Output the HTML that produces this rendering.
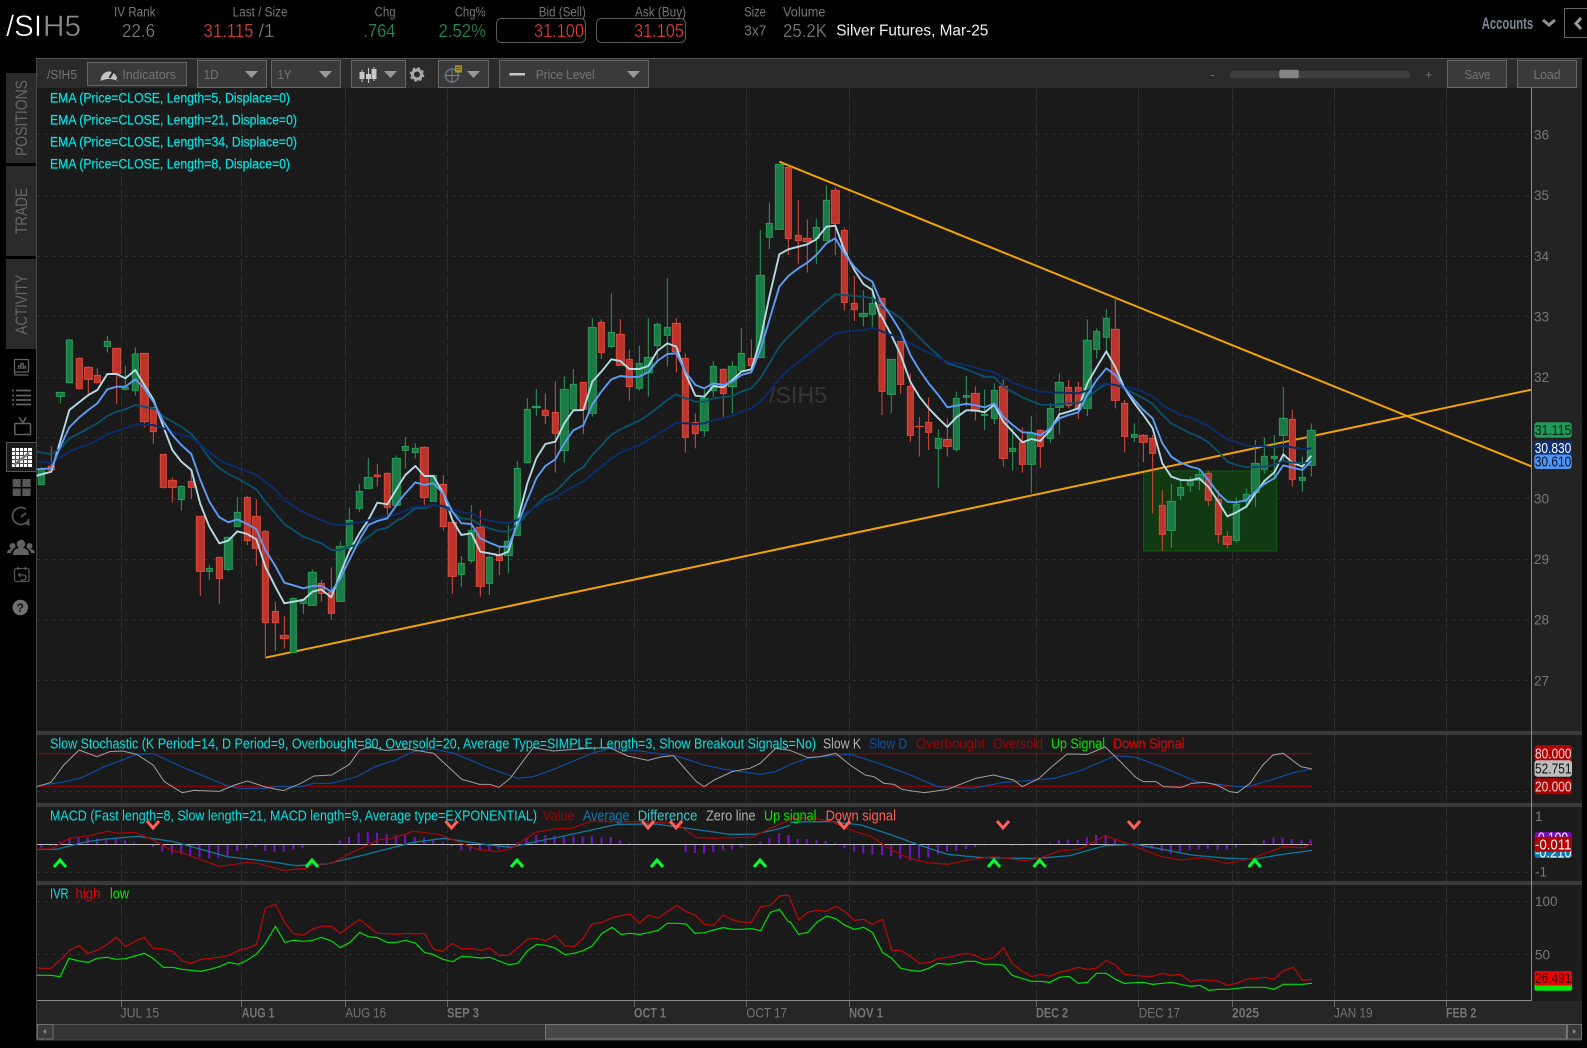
<!DOCTYPE html>
<html><head><meta charset="utf-8"><title>/SIH5</title>
<style>
html,body{margin:0;padding:0;background:#000;width:1587px;height:1048px;overflow:hidden}
svg{display:block;font-family:"Liberation Sans",sans-serif}
path,rect,polyline,line,circle{vector-effect:non-scaling-stroke}
.n{fill:none}
.l{fill:#767676;font-size:13.500px}
.v{fill:#858585;font-size:18.500px;stroke:#000;stroke-width:.35}
.r{fill:#f5402f;font-size:18.500px;stroke:#000;stroke-width:.35}
.g{fill:#22a05a;font-size:18.500px;stroke:#000;stroke-width:.35}
.t{fill:#747474;font-size:12.500px}
.c{fill:#00e4e4;font-size:13.500px;stroke:#00e4e4;stroke-width:.2}
.s{fill:#00e4e4;font-size:14.500px}
.a{fill:#787878;font-size:13.500px}
.d{fill:#737373;font-size:14px}
.b{font-weight:bold}
.tag{font-size:14.500px;fill:#fff}
.tab{fill:#666;font-size:17px}
.w{stroke-width:1;stroke:#2a9a5a}
.x{stroke-width:1;stroke:#dc4a3d}
.gb{fill:#1c7a46;stroke:#2a9a5a;stroke-width:1}
.rb{fill:#bb352c;stroke:#dc4a3d;stroke-width:1}
.e1{stroke:#b4dae6;stroke-width:1.900;fill:none;stroke-linejoin:round}
.e2{stroke:#5c9cf5;stroke-width:1.900;fill:none;stroke-linejoin:round}
.e3{stroke:#0b5068;stroke-width:1.900;fill:none;stroke-linejoin:round}
.e4{stroke:#0b2c6c;stroke-width:1.900;fill:none;stroke-linejoin:round}
.btn{fill:#3a3a3a;stroke:#666;stroke-width:1}
</style></head><body>
<svg width="1587" height="1048" viewBox="0 0 1587 1048" xmlns="http://www.w3.org/2000/svg">
<rect width="1587" height="1048" fill="#000"/>

<!-- header -->
<text x="6" y="36" font-size="30" fill="#fff" stroke="#000" stroke-width=".5" textLength="36" lengthAdjust="spacingAndGlyphs">/SI</text>
<text x="43" y="36" font-size="30" fill="#8a8a8a" stroke="#000" stroke-width=".5" textLength="38" lengthAdjust="spacingAndGlyphs">H5</text>
<text class="l" x="114" y="16.500" textLength="41.500" lengthAdjust="spacingAndGlyphs">IV Rank</text>
<text class="v" x="122" y="37" textLength="33" lengthAdjust="spacingAndGlyphs">22.6</text>
<text class="l" x="232.600" y="16.500" textLength="55" lengthAdjust="spacingAndGlyphs">Last / Size</text>
<text class="r" x="203.500" y="37" textLength="50" lengthAdjust="spacingAndGlyphs">31.115</text>
<text class="v" x="258.600" y="37" textLength="16" lengthAdjust="spacingAndGlyphs">/1</text>
<text class="l" x="374.600" y="16.500" textLength="21" lengthAdjust="spacingAndGlyphs">Chg</text>
<text class="g" x="363.400" y="37" textLength="32" lengthAdjust="spacingAndGlyphs">.764</text>
<text class="l" x="454.700" y="16.500" textLength="31" lengthAdjust="spacingAndGlyphs">Chg%</text>
<text class="g" x="438.500" y="37" textLength="47.500" lengthAdjust="spacingAndGlyphs">2.52%</text>
<rect x="496.500" y="18.500" width="89" height="24" rx="5" fill="none" stroke="#5a5a5a"/>
<text class="l" x="538.800" y="16.500" textLength="47" lengthAdjust="spacingAndGlyphs">Bid (Sell)</text>
<text class="r" x="534" y="37" textLength="50" lengthAdjust="spacingAndGlyphs">31.100</text>
<rect x="596.500" y="18.500" width="89" height="24" rx="5" fill="none" stroke="#5a5a5a"/>
<text class="l" x="635" y="16.500" textLength="51" lengthAdjust="spacingAndGlyphs">Ask (Buy)</text>
<text class="r" x="634" y="37" textLength="50" lengthAdjust="spacingAndGlyphs">31.105</text>
<text class="l" x="744.300" y="16.500" textLength="21.500" lengthAdjust="spacingAndGlyphs">Size</text>
<text class="l" x="744.300" y="35.500" textLength="22" lengthAdjust="spacingAndGlyphs" style="font-size:15px">3x7</text>
<text class="l" x="783" y="16.500" textLength="42.500" lengthAdjust="spacingAndGlyphs">Volume</text>
<text class="v" x="783" y="37" textLength="44" lengthAdjust="spacingAndGlyphs">25.2K</text>
<text x="836.300" y="35.500" font-size="16" fill="#f2f2f2" textLength="152" lengthAdjust="spacingAndGlyphs">Silver Futures, Mar-25</text>
<text x="1481.700" y="29" font-size="16.500" font-weight="bold" fill="#7b8794" textLength="51.500" lengthAdjust="spacingAndGlyphs">Accounts</text>
<path d="M1543 20l6 5 6-5" fill="none" stroke="#8a949e" stroke-width="3"/>
<rect x="1564.500" y="8.500" width="30" height="29" fill="none" stroke="#666"/>
<path d="M1581 18l-5 5.500 5 5.500" fill="none" stroke="#9a9a9a" stroke-width="3"/>

<!-- sidebar tabs -->
<rect x="6" y="73" width="30" height="90" fill="#2a2a2a"/>
<rect x="6" y="166" width="30" height="90" fill="#2a2a2a"/>
<rect x="6" y="259" width="30" height="90" fill="#2a2a2a"/>
<text class="tab" transform="translate(27,118) rotate(-90)" text-anchor="middle" textLength="76" lengthAdjust="spacingAndGlyphs">POSITIONS</text>
<text class="tab" transform="translate(27,211) rotate(-90)" text-anchor="middle" textLength="46" lengthAdjust="spacingAndGlyphs">TRADE</text>
<text class="tab" transform="translate(27,304.500) rotate(-90)" text-anchor="middle" textLength="60" lengthAdjust="spacingAndGlyphs">ACTIVITY</text>

<!-- chart frame -->
<rect x="36" y="58" width="1546" height="982" fill="#1a1a1a"/>
<rect x="36" y="58" width="1" height="982" fill="#484848"/>
<rect x="37" y="59" width="1545" height="29" fill="#2a2a2a"/>
<rect x="36" y="58" width="1546" height="1" fill="#555"/>
<rect x="1532" y="88" width="50" height="643" fill="#232323"/>
<rect x="1532" y="735" width="50" height="265" fill="#1c1c1c"/>

<!-- grids -->
<path d="M121.500 88V1000M241.500 88V1000M345.500 88V1000M447.500 88V1000M634.500 88V1000M746.500 88V1000M849.500 88V1000M1036.500 88V1000M1138.500 88V1000M1232.500 88V1000M1334.500 88V1000M1446.500 88V1000" stroke="#2c2c2c" stroke-width="1" stroke-dasharray="14 3" fill="none"/>
<path d="M37 134.500H1531M37 195.500H1531M37 256.500H1531M37 316.500H1531M37 377.500H1531M37 437.500H1531M37 498.500H1531M37 559.500H1531M37 619.500H1531M37 680.500H1531M37 791.500H1531M37 872.500H1531M37 901.500H1531M37 954.500H1531" stroke="#2e2e2e" stroke-width="1" stroke-dasharray="3 5" fill="none"/>

<!-- watermark -->
<text x="769" y="403" font-size="23" fill="#363636" textLength="58" lengthAdjust="spacingAndGlyphs">/SIH5</text>

<!-- green box -->
<rect x="1143.500" y="471" width="133" height="80" fill="#113a12" stroke="#0b5c0b"/>

<!-- trend lines -->
<path d="M265.300 657.700L1531.300 389.700M779.300 161.700L1531.300 466.300" stroke="#f0a400" stroke-width="2" fill="none"/>

<!-- candles part 1 -->
<g transform="translate(0,330) scale(.33333)">
<path class="w n" d="M124 412V464M181 187V220M208 27V160M322 18V68M376 108V182M406 52V197M544 466V542M628 705V750M685 622V725M712 502V590M880 803V967M910 808V852M937 718V826M1021 634V814M1048 532V655M1078 462V546M1105 384V475M1189 376V526"/>
<path class="x n" d="M154 350V420M238 82V178M265 108V190M292 115V160M350 55V222M433 70V292M460 232V342M490 373V476M517 442V518M574 420V506M601 559V798M658 680V822M742 498V645M769 508V708M796 600V982M826 816V962M853 858V956M964 750V815M994 712V870M1132 402V470M1162 428V560"/>
<path class="gb" d="M124 418m-9 0h18V464h-18zM181 187m-12 0h24V199h-24zM208 30m-9 0h18V158h-18zM322 34m-9 0h18V50h-18zM376 172m-9 0h18V178h-18zM406 72m-9 0h18V182h-18zM544 469m-9 0h18V509h-18zM628 715m-9 0h18V724h-18zM685 622m-12 0h24V718h-24zM712 547m-9 0h18V590h-18zM880 805m-9 0h18V967h-18zM910 808m-9 0h18V820h-18zM937 727m-12 0h24V826h-24zM1021 649m-12 0h24V814h-24zM1048 571m-9 0h18V655h-18zM1078 484m-9 0h18V535h-18zM1105 442m-12 0h24V475h-24zM1189 385m-12 0h24V526h-24z"/>
<path class="rb" d="M154 408m-9 0h18V420h-18zM238 85m-9 0h18V176h-18zM265 112m-12 0h24V148h-24zM292 136m-9 0h18V158h-18zM350 55m-12 0h24V130h-24zM433 70m-12 0h24V275h-24zM460 232m-9 0h18V305h-18zM490 373m-9 0h18V472h-18zM517 451m-12 0h24V472h-24zM574 454m-9 0h18V472h-18zM601 559m-12 0h24V724h-24zM658 682m-9 0h18V745h-18zM742 502m-9 0h18V632h-18zM769 559m-12 0h24V655h-24zM796 604m-9 0h18V878h-18zM826 844m-9 0h18V878h-18zM853 916m-12 0h24V926h-24zM964 760m-9 0h18V790h-18zM994 787m-9 0h18V850h-18zM1132 435m-9 0h18V440h-18zM1162 430m-9 0h18V532h-18z"/>
</g>
<!-- candles part 2 -->
<g transform="translate(400,150) scale(.33333)">
<path class="w n" d="M16 862V955M46 880V925M100 976V1054M184 1218V1310M214 1065V1240M268 1217V1335M325 1125V1270M352 934V1156M382 745V938M409 717V798M493 679V938M520 657V778M577 505V800M634 430V595M718 586V722M745 505V740M772 518V640M802 385V650M913 715V860M940 633V740M997 633V790M1024 535V665M1081 240V623M1108 157V297M1138 43V238M1249 205V342M1279 106V271M1390 421V530M1417 405V530"/>
<path class="x n" d="M73 888V1065M130 975V1142M157 1117V1332M241 1080V1340M298 1190V1275M436 730V822M466 694V968M550 697V852M604 508V627M661 507V646M688 600V752M829 505V668M856 610V908M886 790V895M970 655V802M1054 568V665M1165 45V315M1195 150V342M1222 208V368M1306 112V315M1333 232V482M1363 378V513"/>
<path class="gb" d="M16 889m-9 0h18V901h-18zM46 895m-9 0h18V908h-18zM100 976m-9 0h18V1054h-18zM184 1240m-9 0h18V1273h-18zM214 1141m-9 0h18V1232h-18zM268 1222m-9 0h18V1300h-18zM325 1174m-12 0h24V1217h-24zM352 955m-9 0h18V1156h-18zM382 778m-9 0h18V938h-18zM409 769m-12 0h24V773h-24zM493 718m-12 0h24V902h-24zM520 703m-9 0h18V778h-18zM577 532m-12 0h24V790h-24zM634 547m-9 0h18V590h-18zM718 640m-9 0h18V715h-18zM745 622m-12 0h24V668h-24zM772 523m-9 0h18V587h-18zM802 532m-9 0h18V556h-18zM913 745m-12 0h24V842h-24zM940 649m-9 0h18V722h-18zM997 649m-12 0h24V710h-24zM1024 610m-9 0h18V662h-18zM1081 376m-12 0h24V623h-24zM1108 220m-9 0h18V262h-18zM1138 43m-12 0h24V238h-24zM1249 232m-9 0h18V265h-18zM1279 151m-9 0h18V271h-18zM1390 490m-12 0h24V499h-24zM1417 460m-9 0h18V493h-18z"/>
<path class="rb" d="M73 892m-12 0h24V1042h-24zM130 1003m-9 0h18V1130h-18zM157 1117m-12 0h24V1279h-24zM241 1132m-12 0h24V1309h-24zM298 1215m-9 0h18V1232h-18zM436 781m-9 0h18V797h-18zM466 787m-9 0h18V850h-18zM550 697m-9 0h18V778h-18zM604 517m-9 0h18V607h-18zM661 553m-12 0h24V646h-24zM688 628m-9 0h18V710h-18zM829 520m-12 0h24V605h-24zM856 625m-9 0h18V862h-18zM886 817m-9 0h18V851h-18zM970 658m-9 0h18V731h-18zM1054 625m-9 0h18V647h-18zM1165 52m-9 0h18V265h-18zM1195 256m-9 0h18V272h-18zM1222 265m-12 0h24V275h-24zM1306 121m-12 0h24V220h-24zM1333 241m-9 0h18V457h-18zM1363 460m-9 0h18V479h-18z"/>
</g>
<!-- candles part 3 -->
<g transform="translate(880,280) scale(.33333)">
<path class="w n" d="M34 238V400M175 448V623M229 335V515M259 288V380M314 328V450M343 310V432M398 445V572M454 408V640M511 370V488M538 280V462M622 118V408M650 145V236M679 87V212M763 430V486M874 612V804M902 596V660M931 590V636M958 570V630M1069 652V788M1099 625V680M1126 480V680M1153 472V582M1183 465V590M1210 321V540M1267 530V635M1294 430V590"/>
<path class="x n" d="M6 55V405M62 184V342M91 280V485M118 411V530M146 352V510M202 415V530M286 319V422M370 298V560M427 442V578M481 448V563M566 300V385M595 306V417M706 48V385M734 360V518M790 462V546M818 465V700M847 630V812M985 572V678M1015 630V790M1042 754V805M1237 390V620"/>
<path class="gb" d="M34 238m-12 0h24V343h-24zM175 475m-9 0h18V505h-18zM229 355m-9 0h18V508h-18zM259 346m-9 0h18V352h-18zM314 403m-9 0h18V406h-18zM343 331m-9 0h18V415h-18zM398 505m-9 0h18V514h-18zM454 460m-12 0h24V553h-24zM511 385m-9 0h18V475h-18zM538 307m-12 0h24V382h-24zM622 181m-12 0h24V385h-24zM650 154m-9 0h18V208h-18zM679 115m-9 0h18V172h-18zM763 463m-9 0h18V472h-18zM874 664m-12 0h24V751h-24zM902 622m-9 0h18V646h-18zM931 601m-9 0h18V616h-18zM958 583m-12 0h24V601h-24zM1069 673m-9 0h18V781h-18zM1099 643m-9 0h18V665h-18zM1126 550m-12 0h24V637h-24zM1153 529m-9 0h18V568h-18zM1183 529m-9 0h18V536h-18zM1210 415m-12 0h24V466h-24zM1267 592m-9 0h18V601h-18zM1294 451m-12 0h24V556h-24z"/>
<path class="rb" d="M6 55m-9 0h18V334h-18zM62 184m-9 0h18V313h-18zM91 319m-9 0h18V466h-18zM118 439m-12 0h24V440h-24zM146 427m-9 0h18V457h-18zM202 478m-12 0h24V499h-24zM286 340m-12 0h24V394h-24zM370 319m-12 0h24V535h-24zM427 487m-9 0h18V553h-18zM481 451m-9 0h18V499h-18zM566 322m-9 0h18V376h-18zM595 322m-9 0h18V388h-18zM706 148m-12 0h24V361h-24zM734 370m-9 0h18V469h-18zM790 466m-12 0h24V487h-24zM818 475m-9 0h18V520h-18zM847 676m-9 0h18V763h-18zM985 580m-9 0h18V661h-18zM1015 658m-9 0h18V763h-18zM1042 769m-12 0h24V793h-24zM1237 418m-9 0h18V598h-18z"/>
</g>

<!-- EMAs -->
<g transform="translate(0,330) scale(.33333)">
<polyline class="e1" points="110,437 154,425 208,240 265,195 292,180 322,132 350,132 376,145 406,120 433,165 460,208 490,290 517,360 544,395 574,420 601,522 628,590 658,640 685,632 712,604 742,612 769,628 796,710 826,770 853,820 880,815 910,810 937,785 964,778 994,802 1021,730 1048,665 1078,610 1105,570 1132,518 1162,523 1200,460"/>
<polyline class="e3" points="110,365 154,373 181,355 208,325 238,310 265,295 292,280 322,258 350,245 376,238 406,225 433,230 470,238 490,260 544,290 574,312 601,345 628,385 658,415 685,432 712,445 769,478 796,515 853,582 910,620 964,640 994,660 1021,660 1078,640 1132,600 1162,593 1200,565"/>
<polyline class="e4" points="110,395 154,398 208,365 238,352 280,338 322,312 376,295 406,283 460,285 490,295 544,315 574,322 601,345 658,390 685,403 712,412 769,435 826,478 853,510 910,547 964,570 994,583 1021,586 1078,577 1132,565 1200,550"/>
<polyline class="e2" points="110,418 154,415 181,350 208,292 238,262 265,240 292,220 322,178 350,170 376,170 406,148 433,175 460,215 490,275 517,315 544,345 574,372 601,450 628,515 658,562 685,577 712,568 742,582 769,598 796,660 826,708 853,758 880,766 910,775 937,768 964,767 994,785 1021,745 1048,690 1078,630 1105,585 1132,573 1162,565 1200,510"/>
</g>
<g transform="translate(400,150) scale(.33333)">
<polyline class="e1" points="0,1000 16,975 46,948 73,978 100,978 130,1030 157,1110 184,1155 214,1150 241,1205 268,1210 298,1216 325,1205 352,1115 382,1000 409,925 436,882 466,875 493,820 520,781 550,780 577,695 604,665 634,628 661,633 688,657 718,657 745,648 772,603 802,580 829,590 856,670 886,737 913,740 940,708 970,712 997,690 1024,665 1054,658 1081,570 1108,440 1138,313 1165,298 1195,290 1222,283 1249,268 1279,230 1306,227 1333,300 1363,360 1390,402 1417,420 1440,500"/>
<polyline class="e3" points="0,1110 46,1075 73,1075 100,1065 130,1070 157,1085 184,1105 214,1108 241,1125 268,1135 298,1144 325,1145 352,1125 382,1090 436,1040 466,1025 520,970 550,952 577,915 634,855 661,838 718,812 745,795 802,750 829,733 856,745 886,755 913,755 940,745 997,738 1024,725 1054,715 1081,685 1108,640 1138,590 1165,560 1222,505 1279,455 1306,433 1390,440 1417,445 1440,460"/>
<polyline class="e4" points="0,1088 46,1070 73,1070 100,1065 130,1068 184,1087 214,1090 241,1105 298,1118 325,1120 352,1110 382,1085 436,1053 466,1042 520,1010 550,995 577,972 634,925 661,908 718,885 745,870 829,818 886,822 913,820 940,810 970,805 997,797 1024,785 1054,775 1081,755 1108,725 1138,685 1165,660 1222,615 1279,570 1306,550 1333,545 1390,540 1417,533 1440,542"/>
<polyline class="e2" points="0,1050 16,1030 46,997 73,1005 100,1000 130,1030 157,1085 184,1120 214,1122 241,1165 268,1178 298,1190 325,1190 352,1125 382,1050 409,985 436,948 466,928 493,880 520,841 550,826 577,763 604,725 634,688 661,678 688,681 718,680 745,667 772,633 802,612 829,610 856,665 886,705 913,715 940,700 970,705 997,695 1024,675 1054,667 1081,600 1108,510 1138,410 1165,378 1195,355 1222,338 1249,315 1279,280 1306,265 1333,310 1363,350 1390,378 1417,395 1440,450"/>
</g>
<g transform="translate(880,280) scale(.33333)">
<polyline class="e1" points="0,100 34,165 62,225 91,305 118,350 146,385 175,415 202,441 229,412 259,391 286,391 314,397 343,374 370,425 398,455 427,487 454,477 481,483 511,450 538,403 566,395 595,385 622,310 650,262 679,214 706,262 734,325 763,370 790,405 818,445 847,550 874,590 902,600 931,601 958,595 985,620 1015,665 1042,709 1069,697 1099,680 1126,640 1153,603 1183,577 1210,523 1237,548 1267,560 1294,527"/>
<polyline class="e3" points="0,80 34,95 62,115 91,145 146,200 202,250 259,268 314,290 343,292 370,320 427,352 481,374 511,375 566,370 595,370 622,355 650,330 679,312 706,315 734,325 790,355 818,372 847,405 874,430 931,460 958,470 985,487 1015,515 1042,545 1069,555 1099,562 1153,560 1183,555 1210,542 1237,548 1267,550 1294,547"/>
<polyline class="e4" points="0,152 34,165 62,175 118,205 202,245 259,255 286,263 343,277 398,308 454,328 481,335 511,337 595,340 622,332 650,318 679,310 706,315 763,326 790,335 818,350 847,375 902,405 931,412 985,438 1042,478 1099,497 1153,499 1183,502 1210,497 1237,502 1267,508 1294,505"/>
<polyline class="e2" points="0,60 34,110 62,155 91,225 118,270 146,310 175,345 202,382 229,377 259,371 286,376 314,382 343,370 370,410 398,435 427,457 454,458 481,466 511,445 538,415 566,405 595,397 622,345 650,300 679,265 706,285 734,325 763,360 790,390 818,415 847,490 874,530 902,548 931,560 958,567 985,600 1015,640 1042,665 1069,667 1099,660 1126,635 1153,612 1183,595 1210,556 1237,563 1267,570 1294,543"/>
</g>

<!-- separators -->
<rect x="37" y="731" width="1545" height="4" fill="#3a3a3a"/>
<rect x="37" y="803" width="1545" height="4" fill="#3a3a3a"/>
<rect x="37" y="881" width="1545" height="4" fill="#3a3a3a"/>

<!-- stochastic -->
<path d="M37 753.700H1312M37 786.300H1312" stroke="#a30000" stroke-width="1" fill="none"/>
<g transform="translate(0,725) scale(.5102,.33333)">
<polyline class="n" stroke="#0a4fa8" stroke-width="1.100" points="72,183 120,172 160,158 205,125 268,88 300,86 360,128 445,182 470,190 520,190 540,185 590,185 615,175 650,175 700,155 735,125 775,105 810,80 850,72 890,85 960,130 1015,160 1045,155 1090,130 1160,85 1195,70 1255,78 1330,95 1380,120 1420,133 1490,148 1520,140 1549,118"/>
<polyline class="n" stroke="#a0a0a0" stroke-width="1" points="72,185 100,172 125,120 155,75 190,95 215,80 240,78 268,88 300,120 322,170 357,203 380,196 430,199 460,180 485,168 520,186 555,197 590,175 615,153 650,150 685,118 705,75 725,65 755,76 800,72 850,85 905,163 940,178 960,178 978,187 1000,160 1045,68 1085,78 1150,70 1195,68 1230,93 1270,106 1295,96 1320,92 1365,170 1380,185 1400,165 1435,140 1470,130 1490,115 1520,70 1549,76"/>
</g>
<g transform="translate(790,725) scale(.5084,.33333)">
<polyline class="n" stroke="#0a4fa8" stroke-width="1.100" points="0,118 35,100 60,95 120,88 180,118 240,152 290,185 360,190 420,172 480,165 520,160 575,135 640,92 680,97 730,125 800,170 880,185 900,185 950,163 990,143 1027,132"/>
<polyline class="n" stroke="#a0a0a0" stroke-width="1" points="0,76 35,98 60,95 90,85 118,120 148,150 165,155 185,175 205,178 220,193 240,198 265,203 310,193 335,178 365,160 400,150 440,165 457,185 490,160 515,125 545,87 585,88 620,66 650,110 680,157 695,170 720,170 735,185 770,187 790,175 815,172 840,180 865,200 880,203 905,175 930,120 950,90 970,85 1005,125 1027,132"/>
</g>

<!-- MACD -->
<g transform="translate(0,725) scale(.5102,.33333)">
<path class="n" stroke="#7612c4" stroke-width="2" d="M81 358V368M99 358V363M118 358V350M136 358V338M154 358V336M172 358V338M190 358V340M208 358V340M227 358V340M245 358V346M263 358V352M300 358V366M318 358V380M337 358V386M355 358V388M373 358V393M391 358V398M410 358V400M428 358V400M446 358V393M465 358V378M483 358V370M501 358V366M520 358V378M538 358V380M556 358V380M575 358V373M593 358V370M611 358V361M630 358V356M648 358V355M666 358V346M684 358V336M703 358V323M721 358V322M739 358V323M758 358V328M776 358V330M794 358V330M813 358V336M831 358V338M849 358V346M868 358V352M886 358V364M904 358V376M922 358V376M941 358V376M959 358V378M977 358V374M996 358V366M1014 358V352M1032 358V340M1051 358V330M1069 358V330M1087 358V332M1105 358V332M1124 358V334M1142 358V334M1160 358V334M1179 358V338M1197 358V336M1215 358V346M1234 358V353M1252 358V356M1270 358V360M1307 358V357M1325 358V360M1344 358V382M1362 358V384M1380 358V386M1398 358V382M1417 358V376M1435 358V373M1453 358V368M1472 358V361M1490 358V350M1508 358V340M1527 358V324M1545 358V330"/>
</g>
<g transform="translate(790,725) scale(.5084,.33333)">
<path class="n" stroke="#7612c4" stroke-width="2" d="M-2 358V333M15 358V342M33 358V342M52 358V346M70 358V348M89 358V353M107 358V370M126 358V380M144 358V386M162 358V388M181 358V390M199 358V394M217 358V402M236 358V406M254 358V400M272 358V398M291 358V388M309 358V380M327 358V378M346 358V372M364 358V366M382 358V362M401 358V356M419 358V360M437 358V362M456 358V362M474 358V360M492 358V359M511 358V353M529 358V346M547 358V344M566 358V344M584 358V338M602 358V330M621 358V330M639 358V342M657 358V352M676 358V360M694 358V368M712 358V372M731 358V380M749 358V386M767 358V380M786 358V376M804 358V373M822 358V372M841 358V374M859 358V374M877 358V368M896 358V360M914 358V355M932 358V346M951 358V338M969 358V338M987 358V342M1006 358V346M1024 358V343"/>
</g>
<path d="M37 844.500H1312" stroke="#bdbdbd" stroke-width="1" fill="none"/>
<g transform="translate(0,725) scale(.5102,.33333)">
<polyline class="n" stroke="#0f7a9a" stroke-width="1.300" points="72,373 110,373 170,350 210,342 270,334 340,350 445,395 530,410 580,422 640,417 700,395 810,352 870,340 950,358 1000,367 1050,350 1100,335 1210,298 1285,297 1380,317 1430,328 1480,328 1530,310 1549,300"/>
<polyline class="n" stroke="#a00808" stroke-width="1.300" points="72,372 100,372 120,355 135,340 175,332 210,319 235,325 265,322 300,345 335,375 360,385 395,405 430,424 450,420 485,412 505,415 555,436 600,430 615,418 650,415 680,390 745,343 765,342 810,319 860,328 905,355 940,375 975,380 1000,372 1050,322 1085,312 1120,310 1160,288 1195,290 1270,290 1325,295 1365,338 1400,340 1475,336 1510,310 1549,284"/>
</g>
<g transform="translate(790,725) scale(.5084,.33333)">
<polyline class="n" stroke="#0f7a9a" stroke-width="1.300" points="0,292 40,290 80,290 140,300 200,330 250,358 310,388 370,397 430,400 490,400 550,392 620,362 680,358 740,375 790,390 860,400 915,402 960,390 1027,376"/>
<polyline class="n" stroke="#a00808" stroke-width="1.300" points="0,280 40,278 80,288 110,310 160,335 200,375 235,400 270,413 310,418 350,405 400,395 460,407 490,400 530,378 570,372 620,332 680,365 730,395 770,405 810,398 860,415 910,400 940,382 970,365 1010,368 1027,355"/>
</g>
<path class="n" stroke="#ff6058" stroke-width="3" d="M147 821l6 7 6-7M445.500 821l6 7 6-7M642 821l6 7 6-7M670 821l6 7 6-7M838 821l6 7 6-7M997 821l6 7 6-7M1128 821l6 7 6-7"/>
<path class="n" stroke="#00ff30" stroke-width="3" d="M54 867l6-7 6 7M306 867l6-7 6 7M511 867l6-7 6 7M651 867l6-7 6 7M754 867l6-7 6 7M988 867l6-7 6 7M1033.600 867l6-7 6 7M1248.700 867l6-7 6 7"/>

<!-- IVR -->
<g transform="translate(0,880) scale(.5102,.33333)">
<polyline class="n" stroke="#c00808" stroke-width="1.200" points="72,262 80,265 100,265 120,238 137,210 155,197 173,220 192,210 210,193 228,172 246,200 265,183 283,172 300,205 320,207 338,213 357,243 375,250 393,238 412,235 430,232 448,226 470,210 485,205 503,193 520,85 540,73 558,128 575,160 595,166 613,147 630,139 650,139 667,160 686,138 705,118 722,140 740,160 758,161 778,163 795,160 815,162 832,160 850,208 868,214 887,190 905,207 923,205 942,211 960,205 978,226 997,226 1015,203 1034,178 1052,175 1070,182 1088,166 1107,197 1125,200 1143,175 1160,133 1180,127 1200,113 1217,107 1235,102 1253,130 1271,106 1290,115 1308,95 1327,76 1345,95 1362,105 1381,133 1399,136 1417,105 1437,120 1455,127 1473,127 1491,80 1510,76 1528,48 1545,45 1549,55"/>
<polyline class="n" stroke="#00dc10" stroke-width="1.200" points="72,286 100,286 118,290 135,235 155,243 173,247 190,235 210,232 228,238 246,236 265,228 283,220 300,235 320,262 338,262 357,268 375,271 393,274 412,268 430,260 448,247 467,253 485,240 503,222 520,190 540,139 558,187 575,181 595,184 613,181 630,172 650,183 667,203 686,187 705,157 722,170 740,173 758,187 778,187 795,181 815,190 832,217 850,224 868,238 887,245 905,229 923,231 942,234 960,232 978,243 997,254 1015,250 1034,212 1052,193 1070,196 1088,204 1107,224 1125,220 1143,212 1160,199 1180,160 1200,142 1217,163 1235,160 1253,163 1271,158 1290,151 1308,130 1327,130 1345,132 1362,160 1381,158 1399,150 1417,143 1437,148 1455,148 1473,146 1491,152 1510,97 1528,88 1545,125 1549,125"/>
</g>
<g transform="translate(790,880) scale(.5084,.33333)">
<polyline class="n" stroke="#c00808" stroke-width="1.200" points="0,55 17,120 35,97 53,91 72,94 90,79 108,95 127,121 145,118 162,133 182,118 200,211 218,211 237,230 255,250 273,248 291,236 310,232 328,226 346,220 364,226 382,239 401,232 420,203 437,250 456,273 475,290 493,283 511,289 530,277 549,270 567,262 585,268 603,265 622,241 640,255 658,283 677,286 695,289 713,289 733,280 750,286 768,283 788,305 806,299 824,301 843,304 861,316 880,309 898,298 916,295 934,292 952,298 970,273 990,262 1008,301 1027,298"/>
<polyline class="n" stroke="#00dc10" stroke-width="1.200" points="0,125 17,163 35,157 53,127 72,108 90,116 108,136 127,148 145,142 162,157 182,217 200,235 218,265 237,271 255,274 273,265 291,250 310,253 328,250 346,244 364,244 382,253 401,253 420,256 437,286 456,295 475,304 493,304 511,307 530,292 549,289 567,310 585,307 603,280 622,280 640,298 658,310 677,308 695,307 713,313 733,310 750,307 768,313 788,319 806,316 824,331 843,328 861,328 880,325 898,322 916,322 934,322 952,328 970,313 990,313 1008,313 1027,310"/>
</g>

<!-- toolbar -->
<text class="t" x="47" y="79" textLength="30" lengthAdjust="spacingAndGlyphs">/SIH5</text>
<rect class="btn" x="87.500" y="62.500" width="99" height="23"/>
<path d="M100.500 81a8.500 9.500 0 1 1 17 0q-8.500-4-17 0z" fill="#c4c4c4"/>
<circle cx="109" cy="75" r="9" fill="none" stroke="#3a3a3a" stroke-width="1" stroke-dasharray="1.500 2.500"/>
<path d="M109.500 78L114.500 69.500" stroke="#2a2a2a" stroke-width="2" fill="none"/>
<text class="t" x="122.400" y="79" textLength="53.500" lengthAdjust="spacingAndGlyphs">Indicators</text>
<rect class="btn" x="197.500" y="60.500" width="69" height="27"/>
<text class="t" x="203.500" y="79" textLength="15" lengthAdjust="spacingAndGlyphs">1D</text>
<path d="M245 71h13l-6.500 7z" fill="#999"/>
<rect class="btn" x="271.500" y="60.500" width="69" height="27"/>
<text class="t" x="277.500" y="79" textLength="14" lengthAdjust="spacingAndGlyphs">1Y</text>
<path d="M319 71h13l-6.500 7z" fill="#999"/>
<rect class="btn" x="351.500" y="60.500" width="54" height="27"/>
<path d="M362 70v12M368.500 68v15M374 67v14" stroke="#c8c8c8" stroke-width="1" fill="none"/>
<rect x="359.500" y="72" width="5" height="7" fill="#c8c8c8"/>
<rect x="366" y="74" width="5" height="5" fill="#c8c8c8"/>
<rect x="371.500" y="69" width="5" height="10" fill="#c8c8c8"/>
<path d="M384 71h13l-6.500 7z" fill="#999"/>
<circle cx="417" cy="74.500" r="4.500" fill="none" stroke="#a8a8a8" stroke-width="3"/>
<circle cx="417" cy="74.500" r="6.300" fill="none" stroke="#a8a8a8" stroke-width="2" stroke-dasharray="2.500 2.500"/>
<rect class="btn" x="438.500" y="60.500" width="50" height="27"/>
<circle cx="452" cy="75.500" r="6.500" fill="none" stroke="#5e6a70" stroke-width="1.800"/>
<path d="M444.500 75.500h15M452 68v15" stroke="#77828a" stroke-width="1" fill="none"/>
<rect x="455" y="65.500" width="7" height="7" fill="#a89a30"/>
<path d="M456 67.500h5M456 69.500h5" stroke="#3a3a20" stroke-width=".8" fill="none"/>
<path d="M467 71h13l-6.500 7z" fill="#999"/>
<rect class="btn" x="499.500" y="60.500" width="149" height="27"/>
<rect x="509.500" y="73" width="15.500" height="2.500" fill="#c8c8c8"/>
<text class="t" x="535.700" y="79" textLength="59" lengthAdjust="spacingAndGlyphs">Price Level</text>
<path d="M627 71h13l-6.500 7z" fill="#999"/>
<text class="t" x="1210.500" y="79">-</text>
<rect x="1230" y="70.700" width="180" height="7.500" rx="3" fill="#3e3e3e"/>
<rect x="1279.300" y="69.700" width="19.500" height="8.500" rx="2" fill="#858585"/>
<text class="t" x="1425" y="79">+</text>
<rect class="btn" x="1447.500" y="60.500" width="59" height="27"/>
<text class="t" x="1464.500" y="79" textLength="26" lengthAdjust="spacingAndGlyphs">Save</text>
<rect class="btn" x="1517.500" y="60.500" width="59" height="27"/>
<text class="t" x="1533.500" y="79" textLength="27" lengthAdjust="spacingAndGlyphs">Load</text>

<!-- legends -->
<text class="c" x="50" y="102.500" textLength="240" lengthAdjust="spacingAndGlyphs">EMA (Price=CLOSE, Length=5, Displace=0)</text>
<text class="c" x="50" y="124.500" textLength="247" lengthAdjust="spacingAndGlyphs">EMA (Price=CLOSE, Length=21, Displace=0)</text>
<text class="c" x="50" y="146.500" textLength="247" lengthAdjust="spacingAndGlyphs">EMA (Price=CLOSE, Length=34, Displace=0)</text>
<text class="c" x="50" y="168.500" textLength="240" lengthAdjust="spacingAndGlyphs">EMA (Price=CLOSE, Length=8, Displace=0)</text>

<text class="s" x="50" y="748.500" textLength="766" lengthAdjust="spacingAndGlyphs">Slow Stochastic (K Period=14, D Period=9, Overbought=80, Oversold=20, Average Type=SIMPLE, Length=3, Show Breakout Signals=No)</text>
<text class="s" style="fill:#b0b0b0" x="823" y="748.500" textLength="38" lengthAdjust="spacingAndGlyphs">Slow K</text>
<text class="s" style="fill:#0a50ac" x="869" y="748.500" textLength="38" lengthAdjust="spacingAndGlyphs">Slow D</text>
<text class="s" style="fill:#a30000" x="916" y="748.500" textLength="69" lengthAdjust="spacingAndGlyphs">Overbought</text>
<text class="s" style="fill:#a30000" x="993" y="748.500" textLength="50" lengthAdjust="spacingAndGlyphs">Oversold</text>
<text class="s" style="fill:#00e800" x="1051" y="748.500" textLength="54" lengthAdjust="spacingAndGlyphs">Up Signal</text>
<text class="s" style="fill:#f00000" x="1113" y="748.500" textLength="71.500" lengthAdjust="spacingAndGlyphs">Down Signal</text>

<text class="s" x="50" y="820.500" textLength="487" lengthAdjust="spacingAndGlyphs">MACD (Fast length=8, Slow length=21, MACD length=9, Average type=EXPONENTIAL)</text>
<text class="s" style="fill:#a30000" x="543" y="820.500" textLength="31.500" lengthAdjust="spacingAndGlyphs">Value</text>
<text class="s" style="fill:#0f7ab0" x="583" y="820.500" textLength="46.500" lengthAdjust="spacingAndGlyphs">Average</text>
<text class="s" style="fill:#3cc8d0" x="637.700" y="820.500" textLength="59.700" lengthAdjust="spacingAndGlyphs">Difference</text>
<text class="s" style="fill:#b0b0b0" x="706" y="820.500" textLength="49.600" lengthAdjust="spacingAndGlyphs">Zero line</text>
<text class="s" style="fill:#00e800" x="764" y="820.500" textLength="52.400" lengthAdjust="spacingAndGlyphs">Up signal</text>
<text class="s" style="fill:#ff6058" x="825.600" y="820.500" textLength="70.400" lengthAdjust="spacingAndGlyphs">Down signal</text>

<text class="s" x="50" y="898.500" textLength="18.500" lengthAdjust="spacingAndGlyphs">IVR</text>
<text class="s" style="fill:#f00000" x="75.500" y="898.500" textLength="25" lengthAdjust="spacingAndGlyphs">high</text>
<text class="s" style="fill:#00e800" x="110" y="898.500" textLength="19" lengthAdjust="spacingAndGlyphs">low</text>

<!-- axis -->
<rect x="1531" y="88" width="1" height="912" fill="#8c8c8c"/>
<rect x="37" y="1000" width="1495" height="1" fill="#8c8c8c"/>
<text class="a" x="1534" y="139.500">36</text>
<text class="a" x="1534" y="200">35</text>
<text class="a" x="1534" y="261">34</text>
<text class="a" x="1534" y="321.500">33</text>
<text class="a" x="1534" y="382">32</text>
<text class="a" x="1534" y="503.500">30</text>
<text class="a" x="1534" y="564">29</text>
<text class="a" x="1534" y="624.500">28</text>
<text class="a" x="1534" y="685.500">27</text>
<rect x="1534.300" y="422.300" width="37.400" height="15.400" rx="3" fill="#229a58"/>
<text class="tag" style="fill:#061a0e" x="1534.800" y="435" textLength="36.500" lengthAdjust="spacingAndGlyphs">31.115</text>
<rect x="1534.300" y="440.700" width="37.400" height="15" rx="2" fill="#0a2f78"/>
<text class="tag" x="1534.800" y="453" textLength="36.500" lengthAdjust="spacingAndGlyphs">30.830</text>
<rect x="1534.300" y="454.500" width="37.400" height="14.500" rx="3" fill="#4f94f0"/>
<text class="tag" style="fill:#08142a" x="1534.800" y="466.500" textLength="36.500" lengthAdjust="spacingAndGlyphs">30.610</text>

<rect x="1534.500" y="745" width="37.500" height="16.700" rx="3" fill="#b00000"/>
<text class="tag" style="fill:#f0d8d8" x="1535" y="758.500" textLength="36.500" lengthAdjust="spacingAndGlyphs">80.000</text>
<rect x="1534.500" y="760.300" width="37.500" height="16.500" rx="3" fill="#bdbdbd"/>
<text class="tag" style="fill:#111" x="1535" y="773.500" textLength="36.500" lengthAdjust="spacingAndGlyphs">52.751</text>
<rect x="1534.500" y="778.300" width="37.500" height="16" rx="3" fill="#b00000"/>
<text class="tag" style="fill:#f0d8d8" x="1535" y="791.500" textLength="36.500" lengthAdjust="spacingAndGlyphs">20.000</text>

<text class="a" x="1535" y="821">1</text>
<text class="a" x="1535" y="876.500">-1</text>
<rect x="1534.500" y="832" width="37.500" height="15" rx="3" fill="#6f10b8"/>
<text class="tag" x="1538" y="842.500" textLength="30" lengthAdjust="spacingAndGlyphs">0.100</text>
<rect x="1534.500" y="845" width="37.500" height="13" rx="3" fill="#0a7ab0"/>
<text class="tag" x="1535" y="857.500" textLength="36.500" lengthAdjust="spacingAndGlyphs">-0.210</text>
<rect x="1534.500" y="836.700" width="37.500" height="15" rx="3" fill="#b00000"/>
<text class="tag" x="1535" y="849.500" textLength="36.500" lengthAdjust="spacingAndGlyphs">-0.011</text>

<text class="a" x="1535" y="906">100</text>
<text class="a" x="1535" y="959.500">50</text>
<rect x="1534.500" y="982" width="37.500" height="8.700" rx="2" fill="#00e800"/>
<rect x="1534.500" y="971" width="37.500" height="14.500" rx="2" fill="#f00000"/>
<text class="tag" style="fill:#300" x="1535" y="983" textLength="36.500" lengthAdjust="spacingAndGlyphs">26.491</text>

<!-- time axis -->
<rect x="37" y="1001" width="1545" height="23" fill="#262626"/>
<path d="M121.500 1001v6M241.500 1001v6M345.500 1001v6M447.500 1001v6M634.500 1001v6M746.500 1001v6M849.500 1001v6M1036.500 1001v6M1138.500 1001v6M1232.500 1001v6M1334.500 1001v6M1446.500 1001v6" stroke="#666" stroke-width="1" fill="none"/>
<text class="d" x="120.400" y="1017.500" textLength="38.800" lengthAdjust="spacingAndGlyphs">JUL 15</text>
<text class="d b" x="241.800" y="1017.500" textLength="32.700" lengthAdjust="spacingAndGlyphs">AUG 1</text>
<text class="d" x="345.400" y="1017.500" textLength="40.600" lengthAdjust="spacingAndGlyphs">AUG 16</text>
<text class="d b" x="447" y="1017.500" textLength="32" lengthAdjust="spacingAndGlyphs">SEP 3</text>
<text class="d b" x="634" y="1017.500" textLength="32" lengthAdjust="spacingAndGlyphs">OCT 1</text>
<text class="d" x="746.400" y="1017.500" textLength="40.600" lengthAdjust="spacingAndGlyphs">OCT 17</text>
<text class="d b" x="849" y="1017.500" textLength="34" lengthAdjust="spacingAndGlyphs">NOV 1</text>
<text class="d b" x="1036" y="1017.500" textLength="32" lengthAdjust="spacingAndGlyphs">DEC 2</text>
<text class="d" x="1138.800" y="1017.500" textLength="41.200" lengthAdjust="spacingAndGlyphs">DEC 17</text>
<text class="d b" x="1232" y="1017.500" textLength="27" lengthAdjust="spacingAndGlyphs">2025</text>
<text class="d" x="1334" y="1017.500" textLength="38.600" lengthAdjust="spacingAndGlyphs">JAN 19</text>
<text class="d b" x="1446" y="1017.500" textLength="30.300" lengthAdjust="spacingAndGlyphs">FEB 2</text>

<!-- scrollbar -->
<rect x="37" y="1024" width="1545" height="15.500" fill="#343434"/>
<rect x="37" y="1024" width="1545" height="1" fill="#555"/>
<rect x="37.500" y="1024.500" width="15.500" height="14.500" fill="#3a3a3a" stroke="#707070"/>
<path d="M46 1029v5l-3-2.500z" fill="#888"/>
<rect x="545.500" y="1024.500" width="1021" height="14.500" fill="#484848" stroke="#777"/>
<rect x="1567.500" y="1024.500" width="14" height="14.500" fill="#3a3a3a" stroke="#707070"/>
<path d="M1573 1029v5l3-2.500z" fill="#888"/>
<rect x="36" y="1039.500" width="1546" height="1" fill="#444"/>

<!-- sidebar icons -->
<g fill="none" stroke="#626262" stroke-width="1.300">
<rect x="14.500" y="359.500" width="14" height="12.500" rx="1"/>
<path d="M14.500 372v2a1 1 0 0 0 1 1h13"/>
<path d="M18.500 369v-3h2v3M21 369v-5.500h2.200v5.500M23.500 369v-2.500h2V369"/>
</g>
<path d="M12 390.500h2M16 390.500h15M12 395.500h2M16 395.500h15M12 400h2M16 400h15M12 404.500h2M16 404.500h15" stroke="#626262" stroke-width="1.700" fill="none"/>
<g fill="none" stroke="#626262" stroke-width="1.500">
<rect x="14.800" y="423.500" width="15.700" height="11" rx="1"/>
<path d="M19 417l4 6 3-6"/>
</g>
<rect x="6" y="442.500" width="30" height="29" fill="#1a1a1a"/>
<path d="M36 442.500H6.500V471.500H36" fill="none" stroke="#555"/>
<rect x="12" y="448" width="20" height="19" fill="#fff"/>
<path d="M15.500 448v19M19.500 448v19M23.500 448v19M27.500 448v19M12 451.500h20M12 455.500h20M12 459.500h20M12 463.500h20" stroke="#444" stroke-width="1" fill="none"/>
<path d="M14 465l15-12" stroke="#777" stroke-width="2.500" fill="none"/>
<rect x="29" y="448" width="3" height="3" fill="#fff"/>
<g fill="#575757">
<rect x="12.700" y="479" width="8" height="8"/><rect x="22.300" y="479" width="8.400" height="8"/>
<rect x="12.700" y="488.500" width="8" height="7.500"/><rect x="22.300" y="488.500" width="8.400" height="7.500"/>
</g>
<circle cx="21" cy="516" r="8.500" fill="none" stroke="#545454" stroke-width="1.800" stroke-dasharray="42 12" transform="rotate(20 21 516)"/>
<path d="M21 517l5-4" stroke="#545454" stroke-width="1.800" fill="none"/>
<path d="M25 524l5 2-1-5z" fill="#545454"/>
<g fill="#626262">
<circle cx="21" cy="544" r="4.300"/>
<circle cx="12.500" cy="546" r="3"/><circle cx="29.500" cy="546" r="3"/>
<path d="M13 555c0-6 4-7 8-7s8 1 8 7z"/>
<path d="M7 553c0-3 2.500-4 5.500-4l1 .8c-2 1-2.500 2-2.500 3.200zM35 553c0-3-2.500-4-5.500-4l-1 .8c2 1 2.500 2 2.500 3.200z"/>
</g>
<g fill="none" stroke="#545454" stroke-width="1.300">
<rect x="14.500" y="568.500" width="14.500" height="13" rx="2"/>
<path d="M18 567v3M25.500 567v3M18.500 575h5a2.500 2.500 0 0 1 0 5h-3M20.500 573l-2 2 2 2"/>
</g>
<circle cx="20.300" cy="607.500" r="7.700" fill="#707070"/>
<text x="20.300" y="612" font-size="12" font-weight="bold" fill="#111" text-anchor="middle">?</text>
</svg>
</body></html>
